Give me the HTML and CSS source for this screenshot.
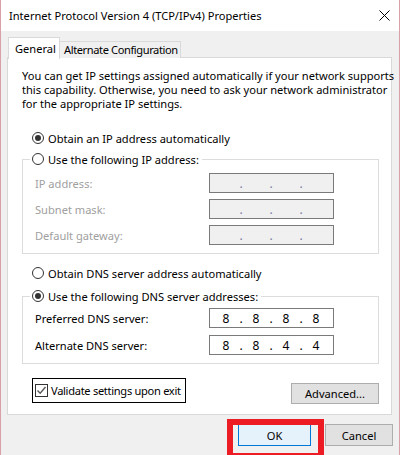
FILE: index.html
```html
<!DOCTYPE html>
<html>
<head>
<meta charset="utf-8">
<link rel="stylesheet" href="styles.css">
</head>
<body>
<div class="window">
  <div class="titlebar">
    <span class="title">Internet Protocol Version 4 (TCP/IPv4) Properties</span>
    <svg class="close" width="11" height="11" viewBox="0 0 11 11"><path d="M0.5 0.5 L10.5 10.5 M10.5 0.5 L0.5 10.5" stroke="#000" stroke-width="1" fill="none"/></svg>
  </div>
  <div class="client">
    <div class="tabs">
      <div class="tab active">General</div>
      <div class="tab alt">Alternate Configuration</div>
    </div>
    <div class="panel">
      <div class="desc">You can get IP settings assigned automatically if your network supports<br>this capability. Otherwise, you need to ask your network administrator<br>for the appropriate IP settings.</div>
      <div class="radio-row first"><span class="radio on"></span><span>Obtain an IP address automatically</span></div>
      <div class="group g1">
        <div class="legend"><span class="radio"></span><span>Use the following IP address:</span></div>
        <div class="rows">
          <div class="row"><span class="lbl dis">IP address:</span><div class="ipbox dis"><span class="seg"></span><span class="dot">.</span><span class="seg"></span><span class="dot">.</span><span class="seg"></span><span class="dot">.</span><span class="seg"></span></div></div>
          <div class="row"><span class="lbl dis">Subnet mask:</span><div class="ipbox dis"><span class="seg"></span><span class="dot">.</span><span class="seg"></span><span class="dot">.</span><span class="seg"></span><span class="dot">.</span><span class="seg"></span></div></div>
          <div class="row"><span class="lbl dis">Default gateway:</span><div class="ipbox dis"><span class="seg"></span><span class="dot">.</span><span class="seg"></span><span class="dot">.</span><span class="seg"></span><span class="dot">.</span><span class="seg"></span></div></div>
        </div>
      </div>
      <div class="radio-row second"><span class="radio"></span><span>Obtain DNS server address automatically</span></div>
      <div class="group g2">
        <div class="legend"><span class="radio on"></span><span>Use the following DNS server addresses:</span></div>
        <div class="rows">
          <div class="row"><span class="lbl">Preferred DNS server:</span><div class="ipbox"><span class="seg">8</span><span class="dot">.</span><span class="seg">8</span><span class="dot">.</span><span class="seg">8</span><span class="dot">.</span><span class="seg">8</span></div></div>
          <div class="row"><span class="lbl">Alternate DNS server:</span><div class="ipbox"><span class="seg">8</span><span class="dot">.</span><span class="seg">8</span><span class="dot">.</span><span class="seg">4</span><span class="dot">.</span><span class="seg">4</span></div></div>
        </div>
      </div>
      <div class="bottom-row">
        <div class="check-focus">
          <span class="checkbox"><svg width="11" height="11" viewBox="0 0 11 11"><path d="M1.5 5.5 L4.2 8.3 L9.5 2" stroke="#5a5a5a" stroke-width="1.4" fill="none"/></svg></span>
          <span class="check-label">Validate settings upon exit</span>
        </div>
        <div class="btn adv">Advanced...</div>
      </div>
    </div>
    <div class="buttons">
      <div class="btn ok">OK</div>
      <div class="btn cancel">Cancel</div>
    </div>
  </div>
  <div class="mark mark-dns"></div>
  <div class="mark mark-ok"></div>
</div>
</body>
</html>
```
FILE: styles.css
```css
* { box-sizing: border-box; }
html, body { margin: 0; padding: 0; }
body {
  width: 400px;
  height: 455px;
  overflow: hidden;
  font-family: "Noto Sans", "Open Sans", sans-serif;
  font-size: 11.1px;
  color: #000;
  background: #fff;
}
.window {
  position: relative;
  width: 400px;
  height: 455px;
  border-left: 1px solid #d9a0a8;
  border-right: 1px solid #d9a0a8;
  background: #f0f0f0;
  overflow: hidden;
  white-space: nowrap;
}
.titlebar {
  height: 31px;
  background: #fff;
  display: flex;
  align-items: center;
  justify-content: space-between;
  padding: 0 9px 0 8px;
}
.title { line-height: 16px; }
.close { display: block; }
.client {
  padding: 6px 7px 0 6px;
}
.tabs {
  display: flex;
  align-items: flex-end;
  margin-left: 1px;
  height: 21px;
  position: relative;
  z-index: 2;
  margin-bottom: -1px;
}
.tab {
  border: 1px solid #d9d9d9;
  border-bottom: none;
  background: #f0f0f0;
  height: 17px;
  line-height: 16px;
  padding: 0 4px 0 4px;
  margin-left: -1px;
}
.tab.alt { width: 122px; letter-spacing: -0.4px; overflow: hidden; }
.tab:first-child { margin-left: 0; }
.tab.active {
  background: #fff;
  height: 22px;
  line-height: 22px;
  padding: 0 6px 0 6px;
  margin-bottom: -1px;
  width: 52px;
}
.panel {
  position: relative;
  z-index: 1;
  height: 358px;
  border: 1px solid #d9d9d9;
  background: #fff;
}
.desc {
  margin: 11px 0 0 14px;
  line-height: 14px;
}
.radio-row, .legend {
  display: flex;
  align-items: center;
  height: 18px;
  gap: 4px;
}
.radio-row { padding-left: 24px; }
.radio-row.first { margin-top: 18px; }
.radio-row.second { margin-top: 10px; }
.radio {
  width: 12px;
  height: 12px;
  border: 1px solid #333;
  border-radius: 50%;
  background: #fff;
  display: flex;
  align-items: center;
  justify-content: center;
  flex: none;
}
.radio.on::after {
  content: "";
  width: 6px;
  height: 6px;
  border-radius: 50%;
  background: #333;
}
.group {
  margin-left: 14px;
  width: 357px;
  border: 1px solid #dcdcdc;
}
.g1 { margin-top: 12px; }
.g2 { margin-top: 14px; }
.legend {
  margin-top: -10px;
  margin-left: 7px;
  padding: 0 3px 0 2px;
  background: #fff;
  width: fit-content;
}
.g1 .legend { margin-bottom: 5px; }
.g2 .legend { margin-bottom: 3px; }
.rows {
  display: flex;
  flex-direction: column;
  padding-left: 12px;
}
.g1 .rows { gap: 6px; padding-bottom: 8px; }
.g2 .rows { gap: 7px; padding-bottom: 8px; }
.row {
  display: flex;
  align-items: center;
  height: 20px;
}
.lbl { width: 174px; flex: none; }
.dis { color: #a0a0a0; }
.ipbox {
  width: 125px;
  height: 20px;
  border: 1px solid #7a7a7a;
  background: #fff;
  display: flex;
  align-items: center;
  padding-left: 3px;
  color: #000;
  font-size: 12px;
}
.ipbox.dis { background: #f0f0f0; color: #7a7aa0; }
.seg { width: 26px; text-align: center; }
.dot { width: 4px; text-align: center; }
.bottom-row {
  margin-top: 14px;
  display: flex;
  align-items: flex-start;
  justify-content: space-between;
  padding-left: 24px;
  padding-right: 12px;
}
.check-focus {
  width: 154px;
  height: 25px;
  border: 1px solid #000;
  display: flex;
  align-items: center;
  padding-left: 2px;
  gap: 3px;
}
.check-label { letter-spacing: -0.3px; }
.checkbox {
  width: 13px;
  height: 13px;
  border: 1px solid #333;
  background: #fff;
  display: flex;
  align-items: center;
  justify-content: center;
  flex: none;
}
.checkbox svg { display: block; }
.btn {
  height: 21px;
  border: 1px solid #adadad;
  background: #e1e1e1;
  display: flex;
  align-items: center;
  justify-content: center;
}
.adv { width: 88px; margin-top: 5px; }
.buttons {
  display: flex;
  justify-content: flex-end;
  gap: 14px;
  margin-top: 9px;
  margin-right: -1px;
}
.ok {
  width: 73px;
  height: 22px;
  background: #e5f1fb;
  border-color: #0078d7;
}
.cancel { width: 68px; height: 22px; }
.mark {
  position: absolute;
  border: 6px solid #ed1c24;
}
.mark-dns { left: 26px; top: 303px; width: 320px; height: 61px; }
.mark-ok { left: 226px; top: 419px; width: 97px; height: 40px; }
```
